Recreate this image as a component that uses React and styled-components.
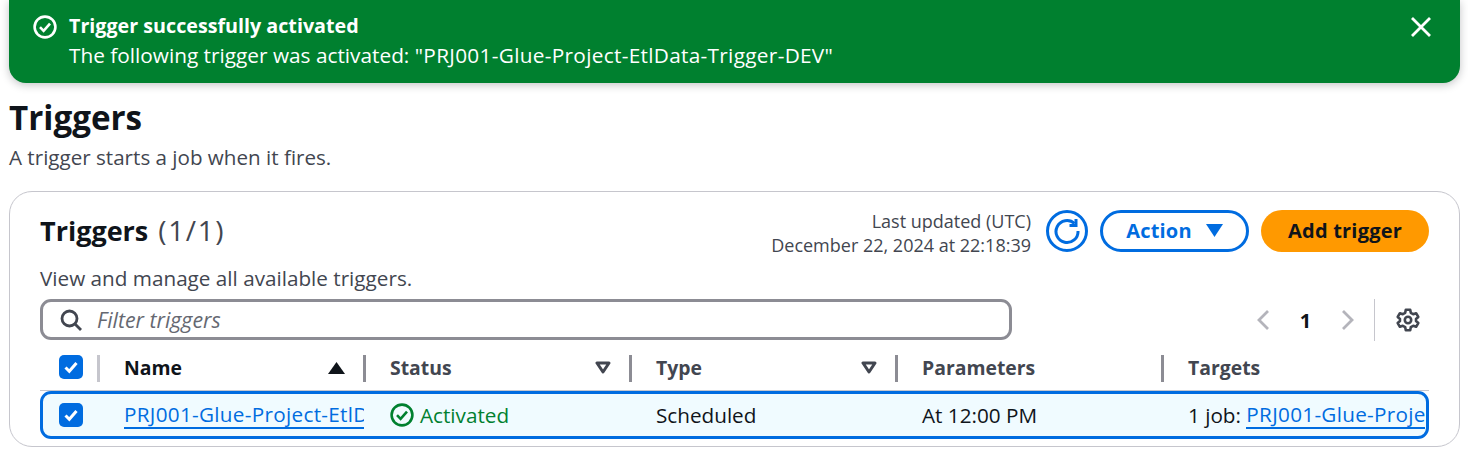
import React from "react";
import styled, { createGlobalStyle } from "styled-components";

const BLUE = "#006ce0";
const INK = "#0f141a";
const MUTED = "#424650";
const FONT = `"Open Sans", "Noto Sans", "Liberation Sans", sans-serif`;

const GlobalStyle = createGlobalStyle`
  html, body {
    margin: 0;
    padding: 0;
    background: #fff;
    overflow: hidden;
  }
  body {
    font-family: ${FONT};
    font-size: 20.7px;
    color: ${INK};
  }
`;

const Page = styled.div`
  width: 1468px;
  height: 451px;
  padding: 0 8px 0 9px;
  box-sizing: border-box;
`;

const Flash = styled.div`
  height: 83px;
  background: #00802f;
  color: #fff;
  border-radius: 0 0 17px 17px;
  box-shadow: 0 2px 8px rgba(15, 20, 26, 0.25);
  display: flex;
  padding: 11px 27px 0 24px;
  box-sizing: border-box;
  gap: 12px;
`;

const FlashIcon = styled.div`
  margin-top: 4px;
  height: 24px;
`;

const FlashBody = styled.div`
  flex: 1;
  font-size: 20.8px;
  line-height: 30px;
  white-space: nowrap;
`;

const FlashTitle = styled.div`
  font-weight: 700;
  font-size: 19.7px;
  line-height: 29px;
`;

const Name = styled.span`
  letter-spacing: 0.3px;
`;

const Close = styled.div`
  margin-top: 4px;
  height: 24px;
`;

const Heading = styled.h1`
  margin: 14px 0 0;
  font-size: 33.2px;
  line-height: 42px;
  font-weight: 700;
  color: ${INK};
`;

const Sub = styled.p`
  margin: 4px 0 0;
  font-size: 20.6px;
  line-height: 28px;
  color: ${MUTED};
`;

const Card = styled.section`
  margin-top: 20px;
  height: 256px;
  box-sizing: border-box;
  border: 1px solid #c6c6cd;
  border-radius: 23px;
  padding: 18px 30px 0;
`;

const CardTop = styled.div`
  display: flex;
  justify-content: space-between;
  height: 42px;
`;

const CardTitle = styled.h2`
  margin: 0;
  font-size: 27px;
  line-height: 40px;
  font-weight: 700;
  color: ${INK};
  span {
    font-weight: 400;
    font-size: 28px;
    letter-spacing: 1.6px;
    margin-left: 3px;
    color: ${MUTED};
  }
`;

const Actions = styled.div`
  display: flex;
  align-items: center;
  gap: 12px;
`;

const Updated = styled.div`
  text-align: right;
  font-size: 18px;
  line-height: 24px;
  padding-top: 3px;
  color: ${MUTED};
  margin-right: 3px;
`;

const RoundButton = styled.div`
  width: 42px;
  height: 42px;
  box-sizing: border-box;
  border: 3px solid ${BLUE};
  border-radius: 50%;
  display: flex;
  align-items: center;
  justify-content: center;
`;

const Button = styled.div`
  height: 42px;
  box-sizing: border-box;
  width: ${(props) => props.width}px;
  padding-bottom: 2px;
  border-radius: 21px;
  display: flex;
  align-items: center;
  justify-content: center;
  font-size: 20px;
  font-weight: 700;
  letter-spacing: 0.2px;
  gap: 14px;
  color: ${(props) => (props.primary ? INK : BLUE)};
  background: ${(props) => (props.primary ? "#ff9900" : "#fff")};
  border: ${(props) => (props.primary ? "none" : `3px solid ${BLUE}`)};
`;

const Description = styled.div`
  margin-top: 12px;
  font-size: 20.7px;
  line-height: 28px;
  color: ${MUTED};
`;

const FilterRow = styled.div`
  margin-top: 7px;
  display: flex;
  justify-content: space-between;
  align-items: flex-start;
  height: 41px;
`;

const Filter = styled.div`
  width: 972px;
  height: 41px;
  box-sizing: border-box;
  border: 3px solid #8c8c94;
  border-radius: 11px;
  display: flex;
  align-items: center;
  padding-left: 17px;
  gap: 15px;
  font-size: 21.3px;
  font-style: italic;
  color: #656871;
`;

const Pager = styled.div`
  display: flex;
  align-items: center;
  height: 42px;
  margin-right: 9px;
`;

const PageNumber = styled.span`
  font-weight: 700;
  font-size: 20px;
  width: 71px;
  text-align: center;
`;

const PagerDivider = styled.span`
  width: 1px;
  height: 42px;
  background: #c6c6cd;
  margin: 0 21px 0 19px;
`;

const Table = styled.div`
  margin-top: 15px;
`;

const Row = styled.div`
  display: grid;
  grid-template-columns: 59px repeat(5, 266px);
  box-sizing: border-box;
`;

const HeadRow = styled(Row)`
  height: 36px;
  align-items: start;
  border-bottom: 1px solid #c6c6cd;
`;

const BodyRow = styled(Row)`
  height: 48px;
  align-items: center;
  background: #f0fbff;
  border: 3px solid ${BLUE};
  border-radius: 11px;
  grid-template-columns: 56px 266px 266px 266px 266px 263px;
`;

const CheckCell = styled.div`
  display: flex;
  justify-content: center;
  padding-left: ${(props) => props.pad || 0}px;
  box-sizing: border-box;
  width: 100%;
`;

const Check = styled.div`
  width: 24px;
  height: 24px;
  border-radius: 5px;
  background: ${BLUE};
  display: flex;
  align-items: center;
  justify-content: center;
`;

const HeadCell = styled.div`
  height: 27px;
  padding: 0 20px 2px 24px;
  display: flex;
  align-items: center;
  justify-content: space-between;
  font-size: 19.4px;
  font-weight: 700;
  color: ${(props) => (props.active ? INK : MUTED)};
  border-left: 3px solid ${(props) => (props.light ? "#c6c6cd" : "#8c8c94")};
  box-sizing: border-box;
  margin-left: -2px;
`;

const Cell = styled.div`
  padding-left: 25px;
  font-size: 20.7px;
  color: ${INK};
  overflow: hidden;
  white-space: nowrap;
  display: flex;
  align-items: center;
  gap: 6px;
`;

const LinkCell = styled(Cell)`
  gap: 0;
  padding-right: 1px;
`;

const Clip = styled.a`
  display: block;
  flex: 1;
  min-width: 0;
  overflow: hidden;
  color: ${BLUE};
  border-bottom: 2px solid ${BLUE};
  line-height: 26px;
  letter-spacing: 0.3px;
`;

const Success = styled.span`
  color: #00802f;
`;

const CircleCheck = ({ color, size }) => (
  <svg width={size} height={size} viewBox="0 0 24 24" fill="none" stroke={color} strokeWidth="2.6">
    <circle cx="12" cy="12" r="10.4" />
    <path d="M7 12.2l3.6 3.6L17 8.6" />
  </svg>
);

const Tick = () => (
  <svg width="16" height="16" viewBox="0 0 16 16" fill="none" stroke="#fff" strokeWidth="3">
    <path d="M2.5 8.5l3.8 3.8L13.5 4" />
  </svg>
);

const SortDown = () => (
  <svg width="16" height="13" viewBox="0 0 16 13" fill="none" stroke={MUTED} strokeWidth="3" strokeLinejoin="round">
    <path d="M2 2h12L8 11z" />
  </svg>
);

const columns = ["Status", "Type", "Parameters", "Targets"];

export default function App() {
  return (
    <Page>
      <GlobalStyle />
      <Flash>
        <FlashIcon>
          <CircleCheck color="#fff" size={24} />
        </FlashIcon>
        <FlashBody>
          <FlashTitle>Trigger successfully activated</FlashTitle>
          <div>
            The following trigger was activated: <Name>"PRJ001-Glue-Project-EtlData-Trigger-DEV"</Name>
          </div>
        </FlashBody>
        <Close>
          <svg width="24" height="24" viewBox="0 0 24 24" fill="none" stroke="#fff" strokeWidth="2.8">
            <path d="M3 3l18 18M21 3L3 21" />
          </svg>
        </Close>
      </Flash>

      <Heading>Triggers</Heading>
      <Sub>A trigger starts a job when it fires.</Sub>

      <Card>
        <CardTop>
          <CardTitle>
            Triggers <span>(1/1)</span>
          </CardTitle>
          <Actions>
            <Updated>
              Last updated (UTC)
              <br />
              December 22, 2024 at 22:18:39
            </Updated>
            <RoundButton>
              <svg width="28" height="28" viewBox="0 0 28 28" fill="none" stroke={BLUE} strokeWidth="3">
                <path d="M21.5 6.5A11 11 0 1 0 25 14" />
                <path d="M23 2v6.5h-6.5" />
              </svg>
            </RoundButton>
            <Button width={149}>
              Action
              <svg width="17" height="13" viewBox="0 0 17 13">
                <path d="M0 0h17L8.5 13z" fill={BLUE} />
              </svg>
            </Button>
            <Button primary width={168}>
              Add trigger
            </Button>
          </Actions>
        </CardTop>

        <Description>View and manage all available triggers.</Description>

        <FilterRow>
          <Filter>
            <svg width="22" height="22" viewBox="0 0 22 22" fill="none" stroke={MUTED} strokeWidth="2.8">
              <circle cx="9.5" cy="9.5" r="7.5" />
              <path d="M15 15l6 6" />
            </svg>
            Filter triggers
          </Filter>
          <Pager>
            <svg width="14" height="22" viewBox="0 0 14 22" fill="none" stroke="#b4b4bb" strokeWidth="2.8">
              <path d="M12 2L3 11l9 9" />
            </svg>
            <PageNumber>1</PageNumber>
            <svg width="14" height="22" viewBox="0 0 14 22" fill="none" stroke="#b4b4bb" strokeWidth="2.8">
              <path d="M2 2l9 9-9 9" />
            </svg>
            <PagerDivider />
            <svg width="24" height="24" viewBox="0 0 24 24" fill="none" stroke={MUTED} strokeWidth="2.6" strokeLinejoin="round">
              <circle cx="12" cy="12" r="3.2" />
              <path d="M9.8 1.8h4.4l.6 3 2.4 1.4 2.9-1 2.2 3.8-2.3 2a8 8 0 0 1 0 2l2.3 2-2.2 3.8-2.9-1-2.4 1.4-.6 3H9.8l-.6-3-2.4-1.4-2.9 1-2.2-3.8 2.3-2a8 8 0 0 1 0-2l-2.3-2 2.2-3.8 2.9 1 2.4-1.4z" />
            </svg>
          </Pager>
        </FilterRow>

        <Table>
          <HeadRow>
            <CheckCell pad={3}>
              <Check>
                <Tick />
              </Check>
            </CheckCell>
            <HeadCell active light>
              Name
              <svg width="17" height="12" viewBox="0 0 17 12">
                <path d="M0 12L8.5 0 17 12z" fill={INK} />
              </svg>
            </HeadCell>
            {columns.map((name, i) => (
              <HeadCell key={name}>
                {name}
                {i < 2 && <SortDown />}
              </HeadCell>
            ))}
          </HeadRow>
          <BodyRow>
            <CheckCell>
              <Check>
                <Tick />
              </Check>
            </CheckCell>
            <LinkCell>
              <Clip>PRJ001-Glue-Project-EtlData-Trigger-DEV</Clip>
            </LinkCell>
            <Cell>
              <CircleCheck color="#00802f" size={24} />
              <Success>Activated</Success>
            </Cell>
            <Cell>Scheduled</Cell>
            <Cell>At 12:00 PM</Cell>
            <LinkCell>
              1 job:&nbsp;
              <Clip>PRJ001-Glue-Project-EtlData-Job</Clip>
            </LinkCell>
          </BodyRow>
        </Table>
      </Card>
    </Page>
  );
}
